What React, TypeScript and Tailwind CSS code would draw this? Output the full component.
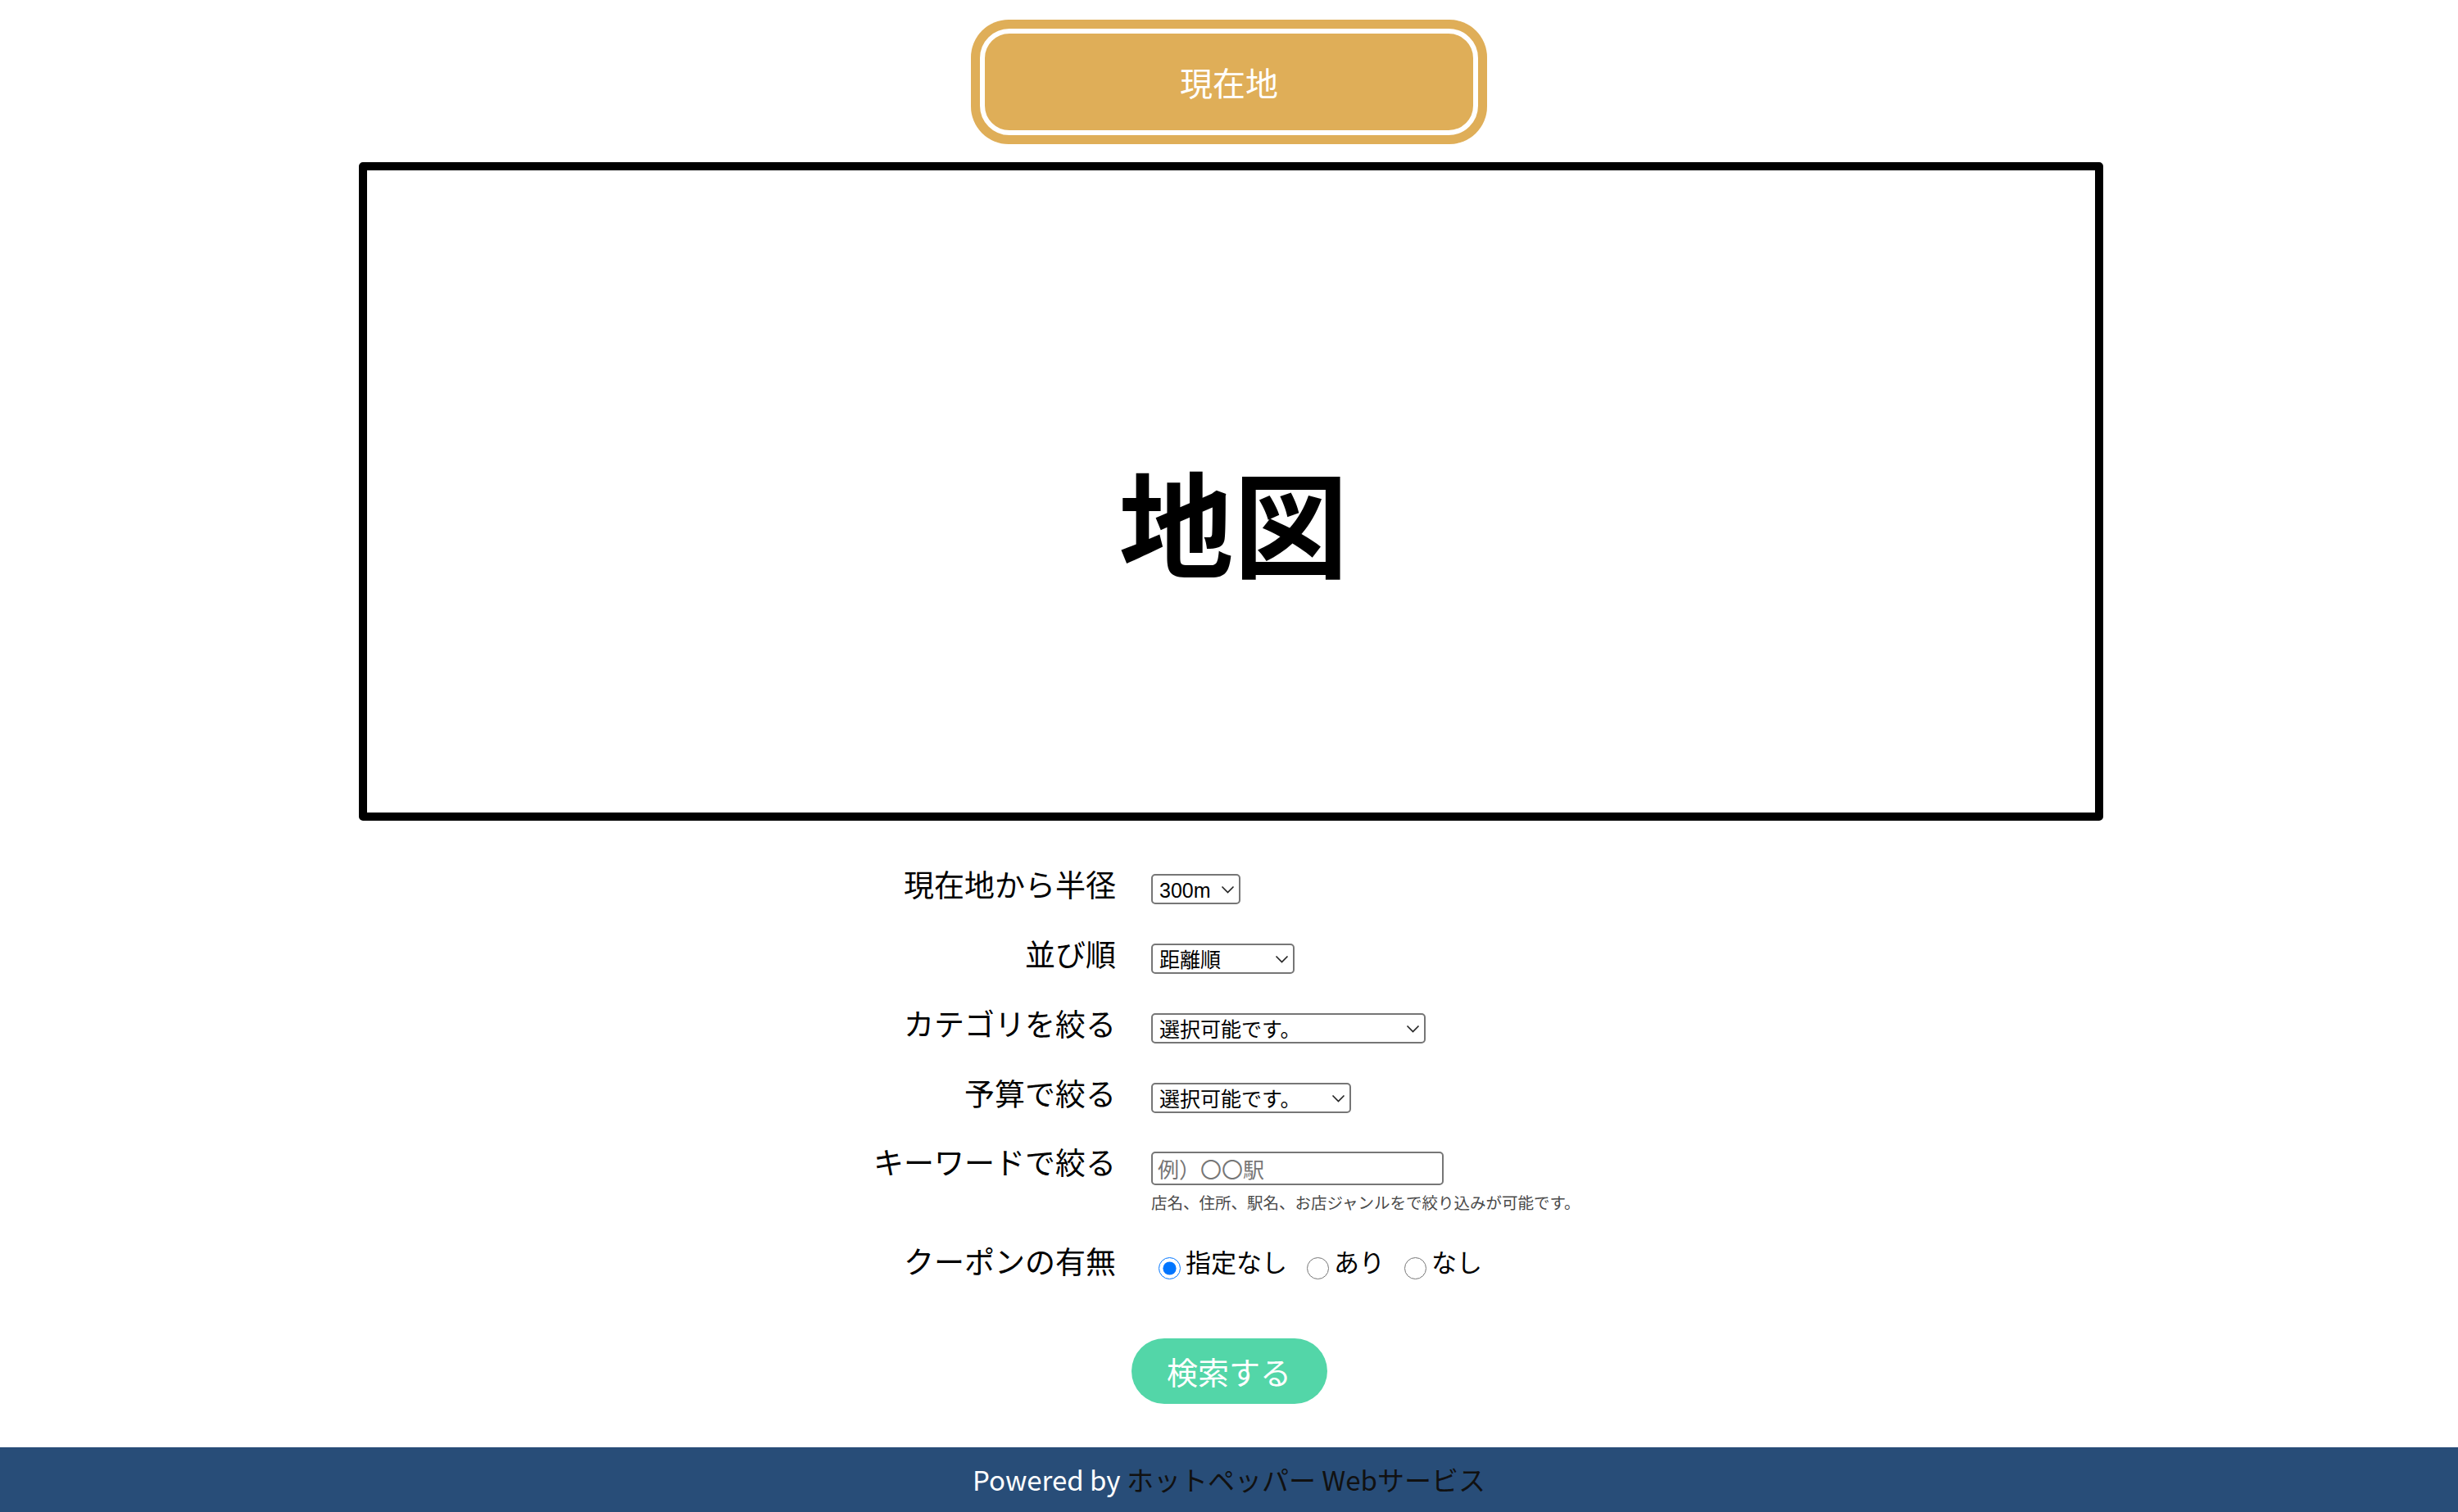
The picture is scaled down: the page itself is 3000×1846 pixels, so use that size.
import React, { useState } from 'react'

const radius = ["300m", "500m", "1000m", "2000m", "3000m"]

const Chevron = () => (
  <svg
    className="absolute right-[7px] top-1/2 -translate-y-1/2 w-[17px] h-[10px] pointer-events-none"
    viewBox="0 0 17 10"
    fill="none"
  >
    <path d="M1.5 1.5 L8.5 8.5 L15.5 1.5" stroke="#222" strokeWidth="1.6" />
  </svg>
)

const Select = ({ options, className }: { options: string[]; className: string }) => {
  return (
    <div className={`relative h-[37px] ${className}`}>
      <select className="appearance-none w-full h-full bg-white border-2 border-[#767676] rounded-[5px] pl-[8px] pr-[28px] text-[25px] text-black font-['Liberation_Sans','Noto_Sans_CJK_JP',sans-serif] outline-none">
        {options.map((item, index) => (
          <option key={index}>{item}</option>
        ))}
      </select>
      <Chevron />
    </div>
  )
}

const Label = ({ name }: { name: string }) => (
  <p className="text-right text-[37px] leading-[37px] text-black -mt-[6px]">{name}</p>
)

const Row = ({ label, children }: { label: string; children: React.ReactNode }) => (
  <div className="grid grid-cols-[1362px_1fr] gap-x-[43px] items-start">
    <Label name={label} />
    <div className="flex flex-col items-start">{children}</div>
  </div>
)

const CouponRow = () => {
  const [coupon, setCoupon] = useState('none')
  const items = [
    { key: 'none', name: '指定なし' },
    { key: 'yes', name: 'あり' },
    { key: 'no', name: 'なし' },
  ]
  return (
    <div className="grid grid-cols-[1362px_1fr] gap-x-[43px] items-start mt-[39px]">
      <p className="text-right text-[37px] leading-[37px] text-black">クーポンの有無</p>
      <div className="flex items-start pl-[9px] gap-x-[24px]">
        {items.map((item) => (
          <label key={item.key} className="flex items-start gap-x-[6px]">
            <input
              type="radio"
              name="coupon"
              checked={coupon === item.key}
              onChange={() => setCoupon(item.key)}
              className="w-[27px] h-[27px] m-0 mt-[14px]"
            />
            <span className="text-[31px] leading-[37px] text-black">{item.name}</span>
          </label>
        ))}
      </div>
    </div>
  )
}

const App = () => {
  return (
    <div className="min-h-[1846px] flex flex-col bg-white font-['Noto_Sans_CJK_JP',sans-serif]">
      <main className="flex-1 flex flex-col items-center pt-[24px]">
        <button className="w-[630px] h-[152px] rounded-[46px] bg-[#dfae58] p-[11px]">
          <div className="h-full rounded-[36px] border-[6px] border-white flex items-center justify-center text-white text-[40px] leading-none">
            現在地
          </div>
        </button>

        <div className="mt-[22px] ml-[5px] w-[2129px] h-[804px] border-[10px] border-black rounded-[5px] flex items-center justify-center pt-[68px] pl-[6px]">
          <h1 className="text-[140px] leading-none font-bold text-black">地図</h1>
        </div>

        <form className="w-full flex flex-col mt-[65px]">
          <div className="flex flex-col gap-y-[48px]">
            <Row label="現在地から半径">
              <Select options={radius} className="w-[109px]" />
            </Row>
            <Row label="並び順">
              <Select options={["距離順", "おすすめ順"]} className="w-[175px]" />
            </Row>
            <Row label="カテゴリを絞る">
              <Select options={["選択可能です。"]} className="w-[335px]" />
            </Row>
            <Row label="予算で絞る">
              <Select options={["選択可能です。"]} className="w-[244px]" />
            </Row>
          </div>
          <div className="mt-[47px]">
            <Row label="キーワードで絞る">
              <input
                type="text"
                placeholder="例）〇〇駅"
                className="w-[357px] h-[41px] border-2 border-[#767676] rounded-[5px] px-[6px] text-[26px] text-black placeholder:text-[#767676] outline-none"
              />
              <p className="mt-[7px] text-[19.5px] leading-[28px] text-[#4a4a4a]">
                店名、住所、駅名、お店ジャンルをで絞り込みが可能です。
              </p>
            </Row>
          </div>
          <CouponRow />
        </form>

        <button className="mt-[72px] w-[239px] h-[80px] rounded-full bg-[#53d6a8] text-white text-[38px] leading-none">
          検索する
        </button>
      </main>

      <footer className="h-[79px] bg-[#284d78] flex items-center justify-center text-[33px]">
        <p className="text-white">
          Powered by <a className="text-[#111]">ホットペッパー Webサービス</a>
        </p>
      </footer>
    </div>
  )
}

export default App
